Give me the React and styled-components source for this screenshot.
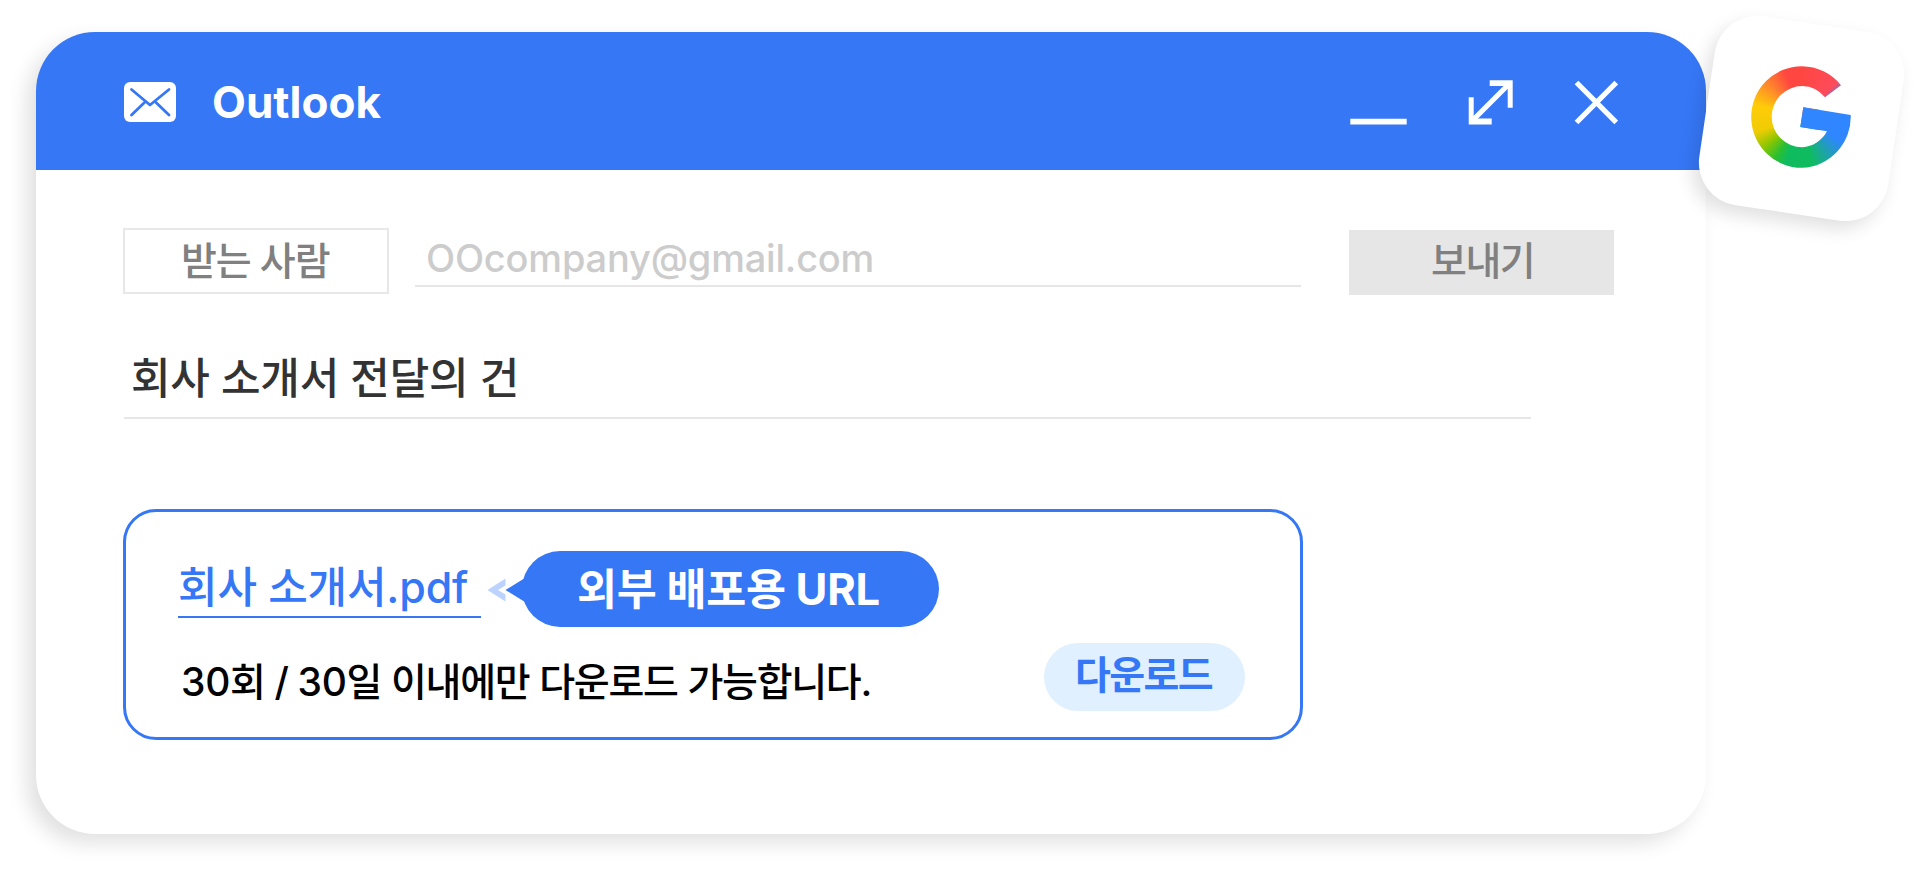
import styled, { createGlobalStyle } from "styled-components";

const GlobalStyle = createGlobalStyle`
  * {
    box-sizing: border-box;
  }
  body {
    margin: 0;
    background: #fff;
    overflow: hidden;
    font-family: Inter, "Noto Sans CJK KR", sans-serif;
  }
`;

const Page = styled.main`
  position: relative;
  width: 1919px;
  height: 871px;
  padding: 32px 0 0 36px;
  overflow: hidden;
`;

const MailWindow = styled.section`
  width: 1670px;
  height: 802px;
  border-radius: 59px;
  background: #fff;
  box-shadow: -9px 9px 20px rgba(0, 0, 0, 0.12);
  overflow: hidden;
`;

const TitleBar = styled.header`
  display: flex;
  align-items: center;
  height: 138px;
  padding: 2px 88px 0;
  background: #3677f6;
  color: #fff;
`;

const Title = styled.h1`
  flex: 1;
  margin: 0 0 0 36px;
  font-size: 44px;
  line-height: 60px;
  font-weight: 700;
`;

const Controls = styled.div`
  display: flex;
  align-items: center;
`;

const Body = styled.div`
  padding: 58px 92px 0 88px;
`;

const RecipientRow = styled.div`
  display: flex;
  align-items: flex-start;
  height: 67px;
  margin-left: -1px;
`;

const Text = styled.span`
  font-size: ${(p) => p.$size}px;
  font-weight: ${(p) => p.$weight || 500};
  letter-spacing: ${(p) => p.$spacing || 0}px;
  word-spacing: ${(p) => p.$word || 0}px;
  white-space: pre;
`;

const Count = styled.span`
  letter-spacing: -0.3px;
`;

const RecipientLabel = styled.div`
  width: 266px;
  height: 66px;
  padding-left: 56px;
  border: 2px solid #e8e8e8;
  line-height: 61px;
  color: #808080;
`;

const AddressField = styled.div`
  width: 886px;
  height: 59px;
  margin: 0 48px 0 26px;
  padding-left: 11px;
  border-bottom: 2px solid #e6e6e6;
  line-height: 60px;
  color: #ccc;
`;

const SendButton = styled.button`
  width: 265px;
  height: 65px;
  margin-top: 2px;
  padding: 0 0 4px 82px;
  border: none;
  background: #e6e6e6;
  color: #808080;
  font-family: inherit;
  line-height: 61px;
  text-align: left;
`;

const Subject = styled.div`
  width: 1407px;
  height: 71px;
  margin-top: 53px;
  padding-left: 7px;
  border-bottom: 2px solid #e6e6e6;
  line-height: 60px;
  color: #333;
`;

const Attachment = styled.article`
  width: 1180px;
  height: 231px;
  margin: 90px 0 0 -1px;
  padding: 39px 55px 0 52px;
  border: 3px solid #3677f6;
  border-radius: 33px;
`;

const FileRow = styled.div`
  display: flex;
  align-items: flex-start;
  height: 76px;
`;

const FileLink = styled.a`
  width: 303px;
  height: 61px;
  margin-top: 6px;
  border-bottom: 2px solid #3677f6;
  line-height: 61px;
  color: #3677f6;
`;

const Pointer = styled.svg`
  flex: none;
  width: 38px;
  height: 24px;
  margin: 27px -3px 0 6px;
`;

const UrlPill = styled.div`
  width: 417px;
  height: 76px;
  padding-left: 55px;
  border-radius: 38px;
  background: #3677f6;
  line-height: 77px;
  color: #fff;
`;

const DownloadRow = styled.div`
  display: flex;
  justify-content: space-between;
  margin-top: 16px;
`;

const Notice = styled.p`
  margin: 14px 0 0 3px;
  line-height: 50px;
  color: #000;
`;

const DownloadButton = styled.button`
  width: 201px;
  height: 68px;
  padding: 0 0 4px 31px;
  border: none;
  border-radius: 34px;
  background: #e0f0ff;
  color: #3677f6;
  font-family: inherit;
  line-height: 64px;
  text-align: left;
`;

// tilted tile that hangs over the corner of the window
const GoogleBadge = styled.div`
  position: absolute;
  top: 23px;
  left: 1706px;
  width: 191px;
  height: 191px;
  border-radius: 43px;
  background: #fff;
  box-shadow: -5px 9px 18px rgba(0, 0, 0, 0.12);
  transform: rotate(8.4deg);
`;

// the first layer keeps the crossbar blue up to its inner end
const GoogleMark = styled.div`
  position: absolute;
  top: 66px;
  left: 1751px;
  width: 102px;
  height: 102px;
  background:
    linear-gradient(#2f86ff, #2f86ff) 48px 40px / 20px 24px no-repeat,
    conic-gradient(
      #ff4641 0deg,
      #fd4b5b 45deg,
      #2f86ff 60deg,
      #2f86ff 122deg,
      #0ebc5f 168deg,
      #0ebc5f 200deg,
      #2cbf2f 213deg,
      #8fc600 232deg,
      #f0cc05 252deg,
      #ffcc08 285deg,
      #ff8b2a 312deg,
      #ff4641 340deg
    );
  clip-path: path(
    "M90 19.3A50.8 50.8 0 0 0 51 0.2A50.8 50.8 0 0 0 51 101.8A50.8 50.8 0 0 0 99.7 49L52.3 41.3L49.3 61L76 65.3A30.6 30.6 0 0 1 51.3 81.3A30.6 30.6 0 0 1 51.3 20.1A30.6 30.6 0 0 1 74 31.3Z"
  );
`;

function MailIcon() {
  return (
    <svg width="52" height="40" viewBox="0 0 52 40">
      <rect width="52" height="40" rx="6" fill="#fff" />
      <g
        fill="none"
        stroke="#3677f6"
        strokeWidth="2.8"
        strokeLinecap="round"
        strokeLinejoin="round"
      >
        <path d="M7.5 7.5L26 23L45 7.5" />
        <path d="M7.5 33L20.5 20.5M45 33L32 20.5" />
      </g>
    </svg>
  );
}

function WindowControls() {
  return (
    <Controls>
      <svg width="268" height="46" viewBox="0 0 268 46">
        <path
          d="M0.3 39.7H56.7V45.5H0.3ZM139.7 1.2H162.7V28.7H157.7V7H139.7ZM118.7 18.3H123.7V39.5H141.7V45.5H118.7Z"
          fill="#fff"
        />
        <g fill="none" stroke="#fff" strokeWidth="5.2">
          <path d="M121.5 42.5L160 4" />
          <path d="M226.5 3.5L266.2 43.5M266.2 3.5L226.5 43.5" />
        </g>
      </svg>
    </Controls>
  );
}

function App() {
  return (
    <Page>
      <GlobalStyle />
      <MailWindow>
        <TitleBar>
          <MailIcon />
          <Title>Outlook</Title>
          <WindowControls />
        </TitleBar>
        <Body>
          <RecipientRow>
            <RecipientLabel>
              <Text $size={39} $spacing={-1.1}>받는 사람</Text>
            </RecipientLabel>
            <AddressField>
              <Text $size={38} $spacing={-0.2}>OOcompany@gmail.com</Text>
            </AddressField>
            <SendButton>
              <Text $size={39} $spacing={-1.5}>보내기</Text>
            </SendButton>
          </RecipientRow>
          <Subject>
            <Text $size={43} $spacing={-0.2}>회사 소개서 전달의 건</Text>
          </Subject>
          <Attachment>
            <FileRow>
              <FileLink>
                <Text $size={43} $spacing={-0.15}>회사 소개서.pdf</Text>
              </FileLink>
              <Pointer viewBox="0 0 38 24">
                <path d="M18.5 0.5V7.5L11 12L18.5 16.5V23.5L0.5 12Z" fill="#bcd3ff" />
                <path d="M18.5 12L38 0V24Z" fill="#3677f6" />
              </Pointer>
              <UrlPill>
                <Text $size={43.5} $weight={700} $spacing={-0.3}>외부 배포용 URL</Text>
              </UrlPill>
            </FileRow>
            <DownloadRow>
              <Notice>
                <Text $size={39} $spacing={-1.3} $word={0.8}>
                  <Count>30</Count>회 / <Count>30</Count>일 이내에만 다운로드 가능합니다.
                </Text>
              </Notice>
              <DownloadButton>
                <Text $size={39} $weight={700} $spacing={-1.6}>다운로드</Text>
              </DownloadButton>
            </DownloadRow>
          </Attachment>
        </Body>
      </MailWindow>
      <GoogleBadge />
      <GoogleMark />
    </Page>
  );
}

export default App;
